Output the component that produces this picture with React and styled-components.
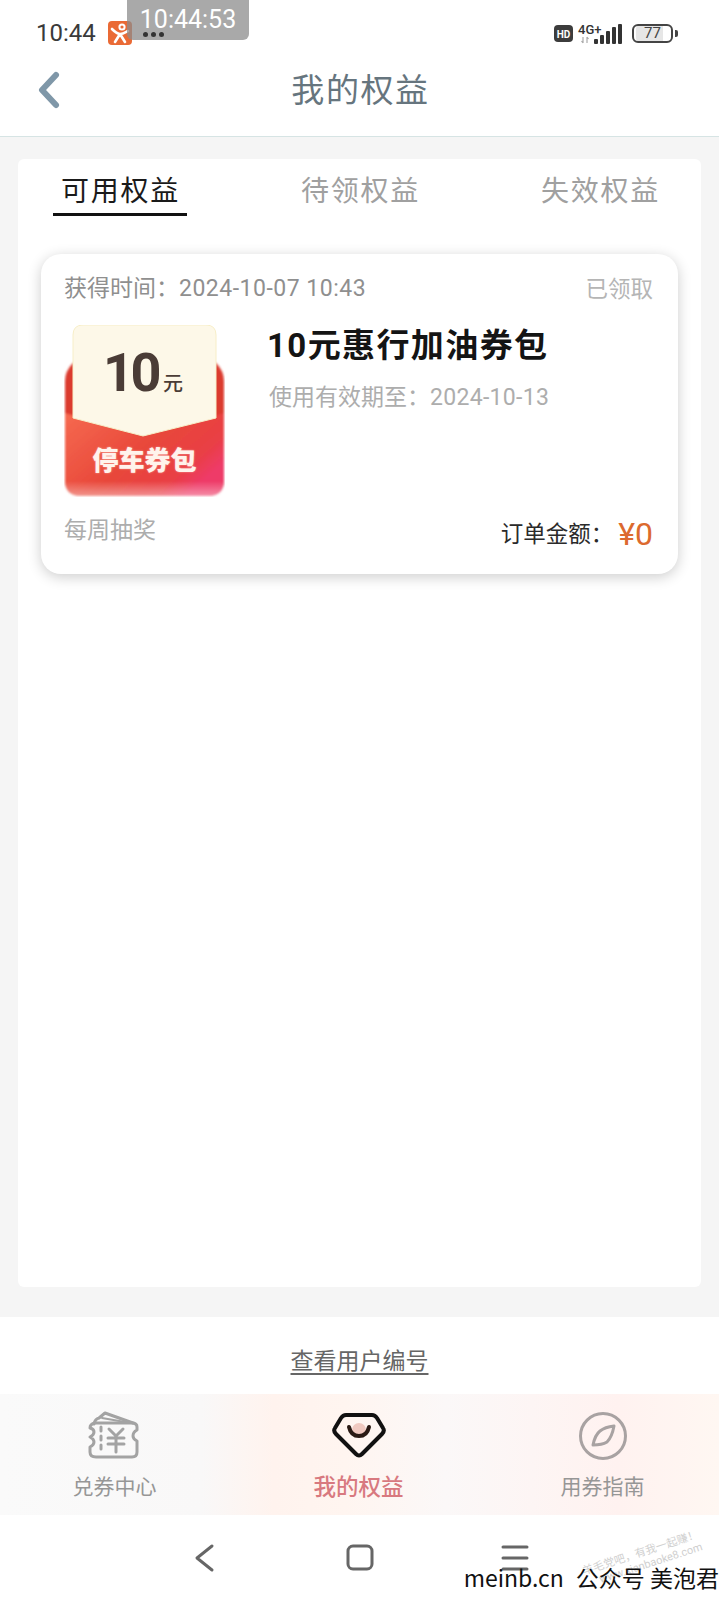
import React from "react";
import styled, { createGlobalStyle } from "styled-components";

const GlobalStyle = createGlobalStyle`
  html, body {
    margin: 0;
    padding: 0;
    background: #fff;
  }
  * {
    box-sizing: border-box;
  }
`;

const Page = styled.div`
  position: relative;
  width: 719px;
  height: 1598px;
  display: flex;
  flex-direction: column;
  overflow: hidden;
  background: #fff;
  font-family: Roboto, "Noto Sans CJK SC", sans-serif;
`;

const StatusBar = styled.div`
  height: 52px;
  flex: none;
  padding: 21px 46px 0 36px;
  display: flex;
  align-items: flex-start;
  justify-content: space-between;
`;

const StatusLeft = styled.div`
  display: flex;
  align-items: center;
  height: 24px;
`;

const Clock = styled.span`
  font-size: 24px;
  line-height: 24px;
  color: #3a3a3a;
  width: 72px;
`;

const AppBadge = styled.svg`
  width: 24px;
  height: 24px;
  display: block;
`;

const Dots = styled.span`
  position: relative;
  z-index: 1;
  display: flex;
  gap: 3px;
  margin-left: 11px;
  margin-top: 2px;
  i {
    width: 5px;
    height: 5px;
    border-radius: 50%;
    background: #333;
  }
`;

const StatusRight = styled.div`
  display: flex;
  align-items: center;
  gap: 8px;
  margin-top: 1px;
`;

const SignalIcons = styled.svg`
  width: 70px;
  height: 22px;
  display: block;
`;

const Battery = styled.div`
  position: relative;
  width: 41px;
  height: 19px;
  border: 2px solid #444;
  border-radius: 6px;
  font-size: 15px;
  line-height: 15px;
  text-align: center;
  color: #444;
  background: linear-gradient(90deg, #e6e6e6 0 78%, #fff 78%);
  background-clip: content-box;
  padding: 0 2px;
  &::after {
    content: "";
    position: absolute;
    right: -7px;
    top: 4px;
    width: 3px;
    height: 7px;
    border-radius: 0 2px 2px 0;
    background: #444;
  }
`;

const TimeStamp = styled.div`
  position: absolute;
  left: 127px;
  top: 0;
  width: 122px;
  height: 40px;
  border-radius: 0 0 6px 6px;
  background: rgba(140, 140, 140, 0.75);
  color: #fff;
  font-size: 25px;
  line-height: 40px;
  text-align: center;
`;

const NavBar = styled.div`
  position: relative;
  height: 85px;
  flex: none;
  display: flex;
  align-items: center;
  justify-content: center;
  border-bottom: 1px solid #d6e4e4;
`;

const BackIcon = styled.svg`
  position: absolute;
  left: 36px;
  top: 18px;
  width: 26px;
  height: 40px;
`;

const NavTitle = styled.h1`
  margin: 0 0 13px 2px;
  font-size: 33px;
  font-weight: 400;
  letter-spacing: 1.6px;
  color: #66757e;
`;

const Content = styled.div`
  flex: 1;
  min-height: 0;
  background: #f5f5f5;
  padding: 22px 18px 30px;
  display: flex;
`;

const Panel = styled.div`
  flex: 1;
  background: #fff;
  border-radius: 6px;
  padding-top: 12px;
`;

const Tabs = styled.div`
  display: flex;
  justify-content: center;
  gap: 106px;
`;

const Tab = styled.div`
  width: 134px;
  height: 45px;
  padding: 1px 0 0 2px;
  text-align: center;
  font-size: 28px;
  line-height: 40px;
  letter-spacing: 1.7px;
  color: ${(p) => (p.$active ? "#1a1a1a" : "#a0a0a0")};
  border-bottom: 3px solid ${(p) => (p.$active ? "#111" : "transparent")};
`;

const Card = styled.div`
  margin: 38px 23px 0;
  height: 320px;
  border-radius: 20px;
  background: #fff;
  box-shadow: 0 3px 14px rgba(0, 0, 0, 0.2);
  padding: 19px 25px 0 23px;
  display: flex;
  flex-direction: column;
`;

const CardHead = styled.div`
  display: flex;
  justify-content: space-between;
  font-size: 23px;
  line-height: 32px;
  color: #8f8f8f;
`;

const Claimed = styled.span`
  color: #b5b5b5;
  font-size: 22.5px;
`;

const DateText = styled.span`
  letter-spacing: ${(p) => p.$spacing || "0.5px"};
`;

const CardBody = styled.div`
  display: flex;
  gap: 44px;
  margin-top: 20px;
`;

const Coupon = styled.div`
  position: relative;
  flex: none;
  width: 161px;
  height: 172px;
`;

const CouponArt = styled.svg`
  position: absolute;
  left: 0;
  top: 0;
  width: 161px;
  height: 172px;
`;

const CouponAmount = styled.div`
  position: absolute;
  left: 39px;
  top: 20px;
  display: flex;
  align-items: baseline;
  color: #4a3c36;
  font-weight: 700;
  font-size: 54px;
  line-height: 56px;
  letter-spacing: -3.5px;
  span {
    font-size: 20px;
    font-weight: 500;
    letter-spacing: 0;
    margin-left: 5px;
  }
`;

const CouponName = styled.div`
  position: absolute;
  left: 0;
  right: 0;
  top: 119px;
  text-align: center;
  color: #fff3ec;
  font-size: 26px;
  line-height: 34px;
  font-weight: 900;
  text-shadow: 0 0 2px rgba(255, 240, 230, 0.6);
`;

const Info = styled.div`
  padding-top: 0;
`;

const InfoTitle = styled.div`
  font-size: 33px;
  line-height: 42px;
  font-weight: 700;
  letter-spacing: 1.4px;
  margin-left: -2px;
  color: #141414;
`;

const InfoDate = styled.div`
  margin-top: 15px;
  font-size: 23px;
  line-height: 32px;
  color: #adadad;
`;

const CardFoot = styled.div`
  display: flex;
  justify-content: space-between;
  align-items: flex-start;
  margin-top: 16px;
`;

const Source = styled.span`
  font-size: 23px;
  line-height: 34px;
  margin-top: 1px;
  color: #adadad;
`;

const Amount = styled.div`
  display: flex;
  align-items: center;
  gap: 5px;
  margin-top: 2px;
  font-size: 22.5px;
  line-height: 38px;
  color: #2a2a2a;
  b {
    font-size: 32px;
    font-weight: 400;
    color: #dc6a2e;
  }
`;

const UserLink = styled.div`
  height: 77px;
  flex: none;
  display: flex;
  align-items: center;
  justify-content: center;
  a {
    font-size: 23px;
    color: #666;
    text-decoration: underline;
    text-underline-offset: 4px;
    margin-top: 6px;
  }
`;

const TabBar = styled.div`
  height: 121px;
  flex: none;
  display: flex;
  justify-content: center;
  gap: 124px;
  padding: 17px 2px 0 0;
  background: linear-gradient(90deg, #fafafa 0%, #f9f8f8 28%, #fff3ee 38%, #fff5f0 48%, #fbf8f8 62%, #fff2f0 86%, #fff7f2 100%);
`;

const TabItem = styled.div`
  width: 120px;
  height: 94px;
  display: flex;
  flex-direction: column;
  align-items: center;
  gap: 10px;
`;

const TabIcon = styled.svg`
  width: 56px;
  height: 50px;
  display: block;
`;

const TabLabel = styled.span`
  font-size: ${(p) => (p.$active ? "22.5px" : "21px")};
  line-height: 32px;
  font-weight: ${(p) => (p.$active ? 500 : 400)};
  color: ${(p) => (p.$active ? "#d8797f" : "#969696")};
`;

const SystemBar = styled.div`
  height: 83px;
  flex: none;
  display: flex;
  justify-content: center;
  gap: 125px;
  padding: 28px 0 0;
`;

const SystemIcon = styled.svg`
  width: 30px;
  height: 30px;
  display: block;
`;

const Watermark = styled.div`
  position: absolute;
  right: 0;
  bottom: 6px;
  display: flex;
  gap: 12px;
  font-family: "Noto Sans CJK SC", sans-serif;
  font-size: 23px;
  line-height: 30px;
  color: #111;
  white-space: nowrap;
`;

const FaintMark = styled.div`
  position: absolute;
  right: 16px;
  bottom: 26px;
  transform: rotate(-18deg);
  font-size: 11px;
  line-height: 13px;
  color: #d0d0d0;
  text-align: right;
`;

const App = () => {
  return (
    <Page>
      <GlobalStyle />
      <StatusBar>
        <StatusLeft>
          <Clock>10:44</Clock>
          <AppBadge viewBox="0 0 24 24">
            <rect width="24" height="24" rx="4" fill="#ea6a35" />
            <circle cx="14" cy="6" r="2.6" fill="none" stroke="#fff" strokeWidth="2" />
            <path d="M4 8c3 3 5 5 8 5s6-2 8-3M12 13l-5 8M12 13l5 8" fill="none" stroke="#fff" strokeWidth="2.6" strokeLinecap="round" />
          </AppBadge>
          <Dots>
            <i />
            <i />
            <i />
          </Dots>
        </StatusLeft>
        <StatusRight>
          <SignalIcons viewBox="0 0 70 22">
            <rect x="0" y="3" width="19" height="17" rx="4" fill="#3c3c3c" />
            <text x="9.5" y="15.5" textAnchor="middle" fontSize="10" fontWeight="700" fill="#fff" fontFamily="Roboto">HD</text>
            <text x="24" y="12" fontSize="13" fontWeight="500" fill="#333" fontFamily="Roboto">4G+</text>
            <rect x="40" y="17" width="4" height="5" rx="1" fill="#333" />
            <rect x="46" y="13" width="4" height="9" rx="1" fill="#333" />
            <rect x="52" y="9" width="4" height="13" rx="1" fill="#333" />
            <rect x="58" y="5" width="4" height="17" rx="1" fill="#333" />
            <rect x="64" y="2" width="4" height="20" rx="1" fill="#333" />
            <path d="M29 15v6M27.5 19l1.500 2M33 15v6M34.500 17l-1.500-2" stroke="#aaa" strokeWidth="1.200" fill="none" />
          </SignalIcons>
          <Battery>77</Battery>
        </StatusRight>
      </StatusBar>
      <TimeStamp>10:44:53</TimeStamp>

      <NavBar>
        <BackIcon viewBox="0 0 26 40">
          <path d="M20 5L6 20l14 15" fill="none" stroke="#7f97a8" strokeWidth="6" strokeLinecap="round" strokeLinejoin="round" />
        </BackIcon>
        <NavTitle>我的权益</NavTitle>
      </NavBar>

      <Content>
        <Panel>
          <Tabs>
            <Tab $active>可用权益</Tab>
            <Tab>待领权益</Tab>
            <Tab>失效权益</Tab>
          </Tabs>
          <Card>
            <CardHead>
              <span>
                获得时间：<DateText>2024-10-07 10:43</DateText>
              </span>
              <Claimed>已领取</Claimed>
            </CardHead>
            <CardBody>
              <Coupon>
                <CouponArt viewBox="0 0 161 172">
                  <defs>
                    <linearGradient id="redLower" x1="0" y1="0" x2="1" y2="0.6">
                      <stop offset="0" stopColor="#f66a50" />
                      <stop offset="0.55" stopColor="#e8473a" />
                      <stop offset="0.85" stopColor="#e93f45" />
                      <stop offset="1" stopColor="#ee3a68" />
                    </linearGradient>
                    <linearGradient id="fadeOut" x1="0" y1="0" x2="0" y2="1">
                      <stop offset="0" stopColor="#fff" stopOpacity="0" />
                      <stop offset="1" stopColor="#fff" stopOpacity="0.45" />
                    </linearGradient>
                    <filter id="softEdge" x="-5%" y="-5%" width="110%" height="110%">
                      <feGaussianBlur stdDeviation="0.8" />
                    </filter>
                  </defs>
                  <g filter="url(#softEdge)">
                    <path d="M9 38 Q1 46 1 56 V155 Q1 171 17 171 H144 Q160 171 160 155 V56 Q160 46 152 38 Z" fill="#db3a2e" />
                    <path d="M1 88 L79 111 L160 88 V155 Q160 171 144 171 H17 Q1 171 1 155 Z" fill="url(#redLower)" />
                  </g>
                  <rect x="0" y="156" width="161" height="16" fill="url(#fadeOut)" />
                  <path d="M9 10 Q9 0 19 0 H142 Q152 0 152 10 V93 L79 111 L9 93 Z" fill="#fdf8e8" stroke="#f7eec8" strokeWidth="1" />
                </CouponArt>
                <CouponAmount>
                  10<span>元</span>
                </CouponAmount>
                <CouponName>停车券包</CouponName>
              </Coupon>
              <Info>
                <InfoTitle>10元惠行加油券包</InfoTitle>
                <InfoDate>
                  使用有效期至：<DateText $spacing="0.3px">2024-10-13</DateText>
                </InfoDate>
              </Info>
            </CardBody>
            <CardFoot>
              <Source>每周抽奖</Source>
              <Amount>
                <span>订单金额：</span>
                <b>¥0</b>
              </Amount>
            </CardFoot>
          </Card>
        </Panel>
      </Content>

      <UserLink>
        <a>查看用户编号</a>
      </UserLink>

      <TabBar>
        <TabItem>
          <TabIcon viewBox="0 0 56 50">
            <g fill="none" stroke="#a3a3a3" strokeWidth="3" strokeLinejoin="round" strokeLinecap="round" transform="translate(-2 0)">
              <path d="M9 13 Q10 8 14 7 L20 2 L48 12" />
              <path d="M17 7 L40 11" strokeWidth="2" />
              <path d="M10 12 H47 Q52 12 52 16 V19 Q48 21 48 25 Q48 28 52 30 V41 Q52 46 47 46 H11 Q5 46 5 41 V36 Q9 34 9 31 Q9 28 5 26 Q9 24 9 21 Q9 18 5 17 Q5 13 10 12 Z" />
              <path d="M16 16 V42" strokeDasharray="4 5" />
              <path d="M24 18 L31 25 L38 18 M23 27 H39 M23 33 H39 M31 25 V41" />
            </g>
          </TabIcon>
          <TabLabel>兑券中心</TabLabel>
        </TabItem>
        <TabItem>
          <TabIcon viewBox="0 0 56 50">
            <circle cx="28" cy="19" r="7" fill="#f0c9c0" />
            <path d="M15 4 H41 Q44 4 46 7 L52 17 Q54 20 51 23 L31 43 Q28 46 25 43 L5 23 Q2 20 4 17 L10 7 Q12 4 15 4 Z" fill="none" stroke="#111" strokeWidth="4" strokeLinejoin="round" />
            <path d="M18 16 Q20 25 28 25 Q36 25 38 16" fill="none" stroke="#2a1a14" strokeWidth="4" strokeLinecap="round" />
          </TabIcon>
          <TabLabel $active>我的权益</TabLabel>
        </TabItem>
        <TabItem>
          <TabIcon viewBox="0 0 56 50">
            <circle cx="28" cy="25" r="22.500" fill="none" stroke="#a8a2a2" strokeWidth="3" />
            <path d="M39 15 Q37 26 32 31 Q27 34 18 34 Q20 24 25 20 Q30 16 39 15 Z" fill="none" stroke="#a8a2a2" strokeWidth="3" strokeLinejoin="round" />
          </TabIcon>
          <TabLabel>用券指南</TabLabel>
        </TabItem>
      </TabBar>

      <SystemBar>
        <SystemIcon viewBox="0 0 30 30">
          <path d="M22 3L7 15l15 12" fill="none" stroke="#666" strokeWidth="3" strokeLinecap="round" strokeLinejoin="round" />
        </SystemIcon>
        <SystemIcon viewBox="0 0 30 30">
          <rect x="3" y="3" width="24" height="23" rx="5" fill="none" stroke="#666" strokeWidth="3" />
        </SystemIcon>
        <SystemIcon viewBox="0 0 30 30">
          <path d="M3 4H27M3 15H27M3 26H27" stroke="#666" strokeWidth="3" strokeLinecap="round" />
        </SystemIcon>
      </SystemBar>

      <FaintMark>
        羊毛党吧，有我一起赚！
        <br />
        www.xianbaoke8.com
      </FaintMark>
      <Watermark>
        <span>meinb.cn</span>
        <span>公众号 美泡君</span>
      </Watermark>
    </Page>
  );
};

export default App;
